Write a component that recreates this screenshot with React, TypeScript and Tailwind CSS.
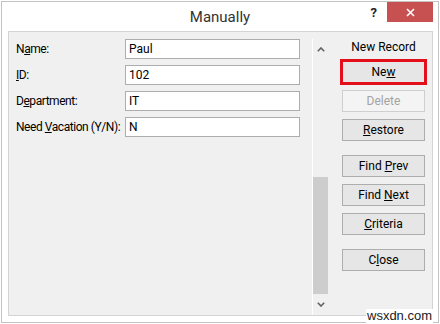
import type { ReactNode } from 'react'

const font = { fontFamily: 'Roboto, "Noto Sans", sans-serif' }

function Field({ label, value }: { label: ReactNode; value: string }) {
  return (
    <div className="flex items-center h-[20px]">
      <div className="w-[109px] text-[12px] tracking-[-0.45px] text-black leading-none whitespace-nowrap">{label}</div>
      <div className="w-[175px] h-[20px] bg-white border border-[#adadad] flex items-center pl-[3px] text-[12px] text-black">
        {value}
      </div>
    </div>
  )
}

function Btn({ children, disabled, active, className = '' }: { children: ReactNode; disabled?: boolean; active?: boolean; className?: string }) {
  return (
    <div
      className={
        'w-[83px] h-[22px] flex items-center justify-center text-[12px] border ' +
        (disabled
          ? 'bg-[#f4f4f4] border-[#cfcfcf] text-[#a3a3a3] '
          : 'bg-[#e6e6e6] border-[#adadad] text-black ') +
        (active ? 'outline-[3px] outline-[#e3101c] -outline-offset-1 ' : '') +
        className
      }
    >
      <span className="whitespace-pre">{children}</span>
    </div>
  )
}

function Chevron({ up }: { up?: boolean }) {
  return (
    <svg width="8" height="5" viewBox="0 0 8 5">
      <polyline
        points={up ? '0.8,4.2 4,1 7.2,4.2' : '0.8,0.8 4,4 7.2,0.8'}
        fill="none"
        stroke="#606060"
        strokeWidth="1.6"
      />
    </svg>
  )
}

export default function App() {
  return (
    <div className="w-[440px] h-[324px] bg-white relative" style={font}>
      <div className="ml-[1px] pt-[1px] w-[438px]">
        <div className="h-[322px] border border-[#c3c3c3] flex flex-col">
          {/* Title bar */}
          <div className="h-[29px] grid grid-cols-[1fr_auto_1fr]">
            <div></div>
            <div className="pt-[5px] text-[15px] text-[#333] leading-[20px]">Manually</div>
            <div className="flex justify-end items-start">
              <div className="mt-[3px] mr-[10px] text-[13px] font-bold text-[#222] leading-[16px]">?</div>
              <div className="w-[46px] h-[20px] mr-[5px] bg-[#c75050] flex items-center justify-center">
                <svg width="9" height="9" viewBox="0 0 9 9">
                  <path d="M1 1 L8 8 M8 1 L1 8" stroke="#fff" strokeWidth="1.6" />
                </svg>
              </div>
            </div>
          </div>

          {/* Form panel */}
          <div className="ml-[6px] w-[425px] h-[285px] bg-[#f0f0f0] border border-[#d4d4d4] flex">
            <div className="w-[303px] pl-[7px] pt-[7px] flex flex-col gap-[6px]">
              <Field label={<>N<u>a</u>me:</>} value="Paul" />
              <Field label={<><u>I</u>D:</>} value="102" />
              <Field label={<>D<u>e</u>partment:</>} value="IT" />
              <Field label={<>Need <u>V</u>acation (Y/N):</>} value="N" />
            </div>

            {/* Scrollbar */}
            <div className="mt-[7px] w-[16px] border-l border-white flex flex-col">
              <div className="h-[20px] flex items-center justify-center">
                <Chevron up />
              </div>
              <div className="flex-1 flex flex-col justify-end">
                <div className="h-[117px] bg-[#cdcdcd]"></div>
              </div>
              <div className="h-[21px] flex items-center justify-center">
                <Chevron />
              </div>
            </div>

            {/* Buttons */}
            <div className="flex-1 pl-[14px] flex flex-col">
              <div className="mt-[8px] w-[83px] text-center text-[12px] text-black leading-[15px]">New Record</div>
              <div className="mt-[6px] flex flex-col gap-[7px]">
                <Btn active>Ne<u>w</u></Btn>
                <Btn disabled>Delete</Btn>
                <Btn><u>R</u>estore</Btn>
                <Btn className="mt-[7px]">Find <u>P</u>rev</Btn>
                <Btn>Find <u>N</u>ext</Btn>
                <Btn><u>C</u>riteria</Btn>
                <Btn className="mt-[7px]">C<u>l</u>ose</Btn>
              </div>
            </div>
          </div>
        </div>
      </div>

      {/* watermark */}
      <div
        className="absolute left-[366px] top-[309px] bg-white px-[1px] text-[13px] leading-[14px] text-[#222]"
        style={{ fontFamily: '"Liberation Sans", Arial, sans-serif' }}
      >
        wsxdn.com
      </div>
    </div>
  )
}
